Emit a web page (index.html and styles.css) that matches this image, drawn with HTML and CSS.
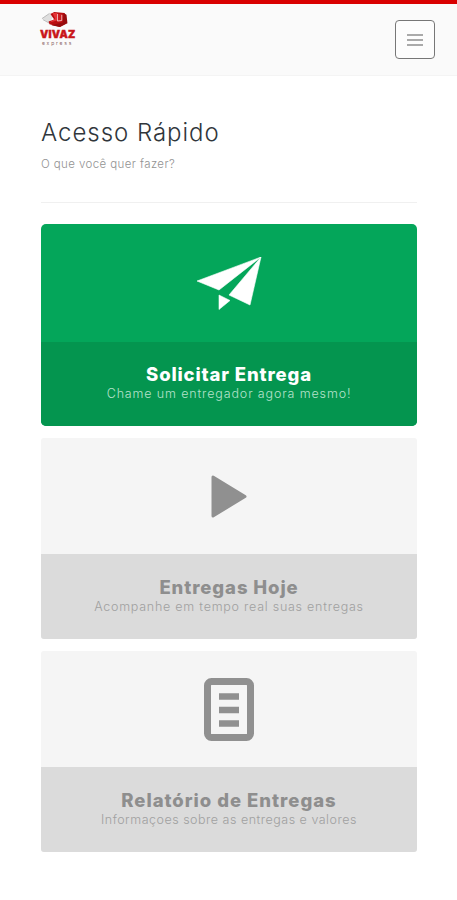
FILE: index.html
```html
<!DOCTYPE html>
<html lang="pt-BR">
<head>
<meta charset="utf-8">
<meta name="viewport" content="width=device-width, initial-scale=1">
<title>Acesso Rápido</title>
<link rel="stylesheet" href="styles.css">
</head>
<body>
<header class="topbar">
  <div class="logo">
    <svg class="logo-mark" viewBox="0 0 36 18">
      <path d="M1 7 10 1 14 2 9 12Z" fill="#dedede"/>
      <path d="M1 7 9 1.500M2 8 9 12" stroke="#aaa" stroke-width=".8"/>
      <path d="M10 2 14 0 25 1 27 12 20 16 9 13 8 10 14 8Z" fill="#b90d10"/>
      <path d="M12 1 17 1 17 9 9 11 15 7Z" fill="#e43336"/>
      <path d="M24 1 27 3 28 12 20 16 11 14 23 11Z" fill="#970b0d"/>
      <path d="M18 2H22V10L17 10.500Z" fill="#c91c20"/>
      <path d="M17.500 2V9.500L22 9V3" stroke="#f5cccc" stroke-width=".9" fill="none"/>
    </svg>
    <span class="logo-name">VIVAZ</span>
    <span class="logo-sub">express</span>
  </div>
  <button class="menu" aria-label="Menu"><i></i><i></i><i></i></button>
</header>
<main class="content">
  <h1 class="title">Acesso Rápido</h1>
  <p class="subtitle">O que você quer fazer?</p>
  <hr class="rule">
  <section class="cards">
    <a class="card card-primary">
      <div class="card-icon">
        <svg width="66" height="53" viewBox="0 0 66 53" fill="#fff"><path d="M65 0 1 24 23 33ZM65 0 33 38 54 48ZM23 38 34 43.500 23 52.500Z" stroke="#fff" stroke-width=".6" stroke-linejoin="round"/></svg>
      </div>
      <div class="card-label">
        <h2 class="t-request">Solicitar Entrega</h2>
        <p class="s-request">Chame um entregador agora mesmo!</p>
      </div>
    </a>
    <a class="card">
      <div class="card-icon">
        <svg width="36" height="43" viewBox="0 0 36 43"><path d="M2 2V41L34 21.500Z" fill="#909090" stroke="#909090" stroke-width="3" stroke-linejoin="round"/></svg>
      </div>
      <div class="card-label">
        <h2 class="t-today">Entregas Hoje</h2>
        <p class="s-today">Acompanhe em tempo real suas entregas</p>
      </div>
    </a>
    <a class="card">
      <div class="card-icon">
        <svg width="50" height="63" viewBox="0 0 50 63"><rect x="3.500" y="3.500" width="43" height="56" rx="4" fill="none" stroke="#909090" stroke-width="7"/><path d="M15 18.500H35M15 32H35M15 45.500H35" stroke="#909090" stroke-width="6.500"/></svg>
      </div>
      <div class="card-label">
        <h2 class="t-report">Relatório de Entregas</h2>
        <p class="s-report">Informaçoes sobre as entregas e valores</p>
      </div>
    </a>
  </section>
</main>
</body>
</html>
```
FILE: styles.css
```css
* { box-sizing: border-box; }
body { margin: 0; min-height: 900px; background: #fff; font-family: Inter, "Open Sans", sans-serif; overflow-x: hidden; }
h1, h2, p { margin: 0; white-space: nowrap; }
.topbar { height: 76px; border-top: 4px solid #d90000; border-bottom: 1px solid #f4f4f4; background: #fafafa; display: flex; justify-content: space-between; align-items: flex-start; padding: 0 22px 0 40px; }
.logo { width: 36px; margin-top: 8px; display: flex; flex-direction: column; }
.logo-mark { width: 36px; height: 17px; display: block; }
.logo-name { font: 900 10.500px/11px Inter, sans-serif; letter-spacing: .2px; color: #c9161a; -webkit-text-stroke: .4px #c9161a; }
.logo-sub { font-size: 5px; line-height: 6px; letter-spacing: 1.8px; padding-left: 2px; color: #8b6565; white-space: nowrap; }
.menu { width: 40px; height: 39px; margin-top: 16px; padding: 0; border: 1.500px solid #777; border-radius: 4px; background: #fdfdfd; display: flex; flex-direction: column; align-items: center; justify-content: center; gap: 3px; }
.menu i { width: 16px; height: 2px; background: #aaa; }
.content { padding: 41px 40px 0 41px; }
.title { font-size: 24px; line-height: 32px; font-weight: 300; color: #30363b; letter-spacing: .97px; }
.subtitle { margin-top: 7px; font-size: 11.500px; line-height: 16px; font-weight: 300; color: #929292; letter-spacing: .4px; }
.rule { height: 1px; border: 0; margin: 30px 0 21px; background: #f0f0f0; }
.cards { display: grid; gap: 12px; }
.card { height: 201px; border-radius: 3px; overflow: hidden; background: #f5f5f5; color: #8e8e8e; display: flex; flex-direction: column; }
.card-icon { height: 116px; display: flex; align-items: center; justify-content: center; }
.card-icon svg { display: block; }
.card-label { flex: 1; background: #dbdbdb; text-align: center; padding-top: 22px; }
.card-label h2 { font-size: 18.500px; line-height: 23px; font-weight: 800; }
.card-label p { font-size: 12.500px; line-height: 15px; font-weight: 300; color: #a0a0a0; }
.card-primary { height: 202px; border-radius: 5px; background: #04a65a; color: #fff; }
.card-primary .card-icon { height: 118px; }
.card-primary .card-label { background: #04954f; padding-top: 21px; }
.card-primary .card-label p { color: #b5e2cb; }
.t-request { letter-spacing: .85px; }
.t-today { letter-spacing: .9px; }
.t-report { letter-spacing: .97px; }
.s-request { letter-spacing: .86px; }
.s-today { letter-spacing: .75px; }
.s-report { letter-spacing: .5px; }
```
